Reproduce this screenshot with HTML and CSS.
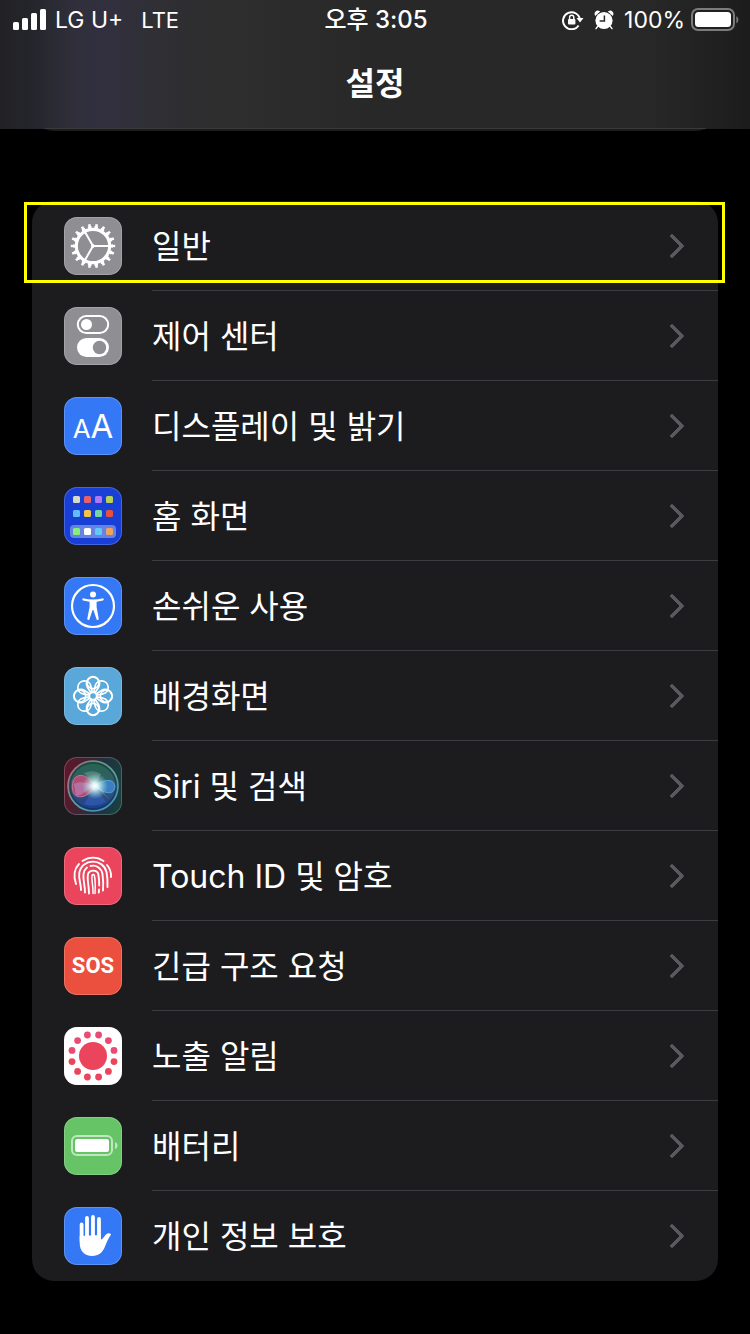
FILE: index.html
```html
<!DOCTYPE html>
<html lang="ko">

<head>
    <meta charset="UTF-8">
    <meta name="viewport" content="width=device-width, initial-scale=1.0">
    <title>설정</title>
    <link rel="stylesheet" href="styles.css">
</head>

<body>
    <header>
        <div class="status">
            <div class="status-left">
                <svg width="34" height="22" viewBox="0 0 34 22" fill="#fff">
                    <rect x="0" y="13" width="6" height="8" rx="1.5" />
                    <rect x="9" y="9" width="6" height="12" rx="1.5" />
                    <rect x="18" y="4" width="6" height="17" rx="1.5" />
                    <rect x="27" y="0" width="6" height="21" rx="1.5" />
                </svg>
                <span class="carrier">LG U+</span>
                <span class="network">LTE</span>
            </div>
            <div class="time">오후 3:05</div>
            <div class="status-right">
                <svg width="22" height="20" viewBox="0 0 22 20">
                    <path d="M16.6 15.5A8.5 8.5 0 1 1 18 10" fill="none" stroke="#fff" stroke-width="2" />
                    <path d="M14.5 8h7l-3.5 4.6z" fill="#fff" />
                    <rect x="6" y="9" width="7.4" height="5.6" rx="1" fill="#fff" />
                    <path d="M7.6 9V7.4a2.1 2.1 0 0 1 4.2 0V9" fill="none" stroke="#fff" stroke-width="1.4" />
                </svg>
                <svg class="alarm" width="20" height="20" viewBox="0 0 20 20">
                    <circle cx="10" cy="10.5" r="8.6" fill="#fff" />
                    <path d="M1.5 4.8A2.5 2.5 0 0 1 5 1.6zM18.5 4.8A2.5 2.5 0 0 0 15 1.6zM4 16l-2 2.6M16 16l2 2.6" fill="#fff" stroke="#fff" stroke-width="1.4" stroke-linecap="round" />
                    <path d="M10.4 5.4v5.7H5.6" fill="none" stroke="#282828" stroke-width="1.5" />
                </svg>
                <span>100%</span>
                <svg width="48" height="24" viewBox="0 0 48 24">
                    <rect x="1" y="1" width="42" height="21" rx="6" fill="none" stroke="#7c7c7c" stroke-width="2" />
                    <rect x="4" y="4" width="36" height="15" rx="3.5" fill="#fff" />
                    <path d="M45.4 8v7.4q2-1 2-3.7t-2-3.7z" fill="#7c7c7c" />
                </svg>
            </div>
        </div>
        <h1>설정</h1>
    </header>

    <main>
        <div class="group-prev"></div>

        <ul class="group">
            <li class="selected">
                <a href="#general">
                    <svg class="icon gray" viewBox="0 0 58 58" fill="none" stroke="#fff">
                        <circle cx="29" cy="29" r="16.7" stroke-width="3.2" />
                        <circle cx="29" cy="29" r="18.8" stroke-width="2.4" pathLength="36" stroke-dasharray="1.1 .9" stroke-dashoffset=".55" />
                        <circle cx="29" cy="29" r="20.7" stroke-width="3" pathLength="36" stroke-dasharray=".7 1.3" stroke-dashoffset=".35" />
                        <path d="M29 29H45M29 29L21 15M29 29L21 43" stroke-width="2" />
                        <circle cx="29" cy="29" r="1.4" fill="#fff" />
                    </svg>
                    <span class="label">일반</span>
                </a>
            </li>
            <li>
                <a href="#control">
                    <svg class="icon gray" viewBox="0 0 58 58">
                        <rect x="13.8" y="9" width="30.4" height="17" rx="8.5" fill="none" stroke="#fff" stroke-width="2" />
                        <circle cx="22.5" cy="17.5" r="5.5" fill="#fff" />
                        <rect x="13" y="31" width="32" height="19" rx="9.5" fill="#fff" />
                        <circle cx="35.5" cy="40.5" r="6.7" fill="#8e8e93" />
                    </svg>
                    <span class="label">제어 센터</span>
                </a>
            </li>
            <li>
                <a href="#display">
                    <span class="icon blue letters"><small>A</small>A</span>
                    <span class="label">디스플레이 및 밝기</span>
                </a>
            </li>
            <li>
                <a href="#home">
                    <svg class="icon navy" viewBox="0 0 58 58">
                        <rect x="6" y="38" width="46" height="13" rx="4" fill="#6584e2" />
                        <rect x="9" y="9" width="7" height="7" rx="1.5" fill="#d9d8d0" />
                        <rect x="20" y="9" width="7" height="7" rx="1.5" fill="#ea5f68" />
                        <rect x="31" y="9" width="7" height="7" rx="1.5" fill="#b078f4" />
                        <rect x="42" y="9" width="7" height="7" rx="1.5" fill="#b9d254" />
                        <rect x="9" y="23" width="7" height="7" rx="1.5" fill="#61bdf8" />
                        <rect x="20" y="23" width="7" height="7" rx="1.5" fill="#f6c445" />
                        <rect x="31" y="23" width="7" height="7" rx="1.5" fill="#72d6a5" />
                        <rect x="42" y="23" width="7" height="7" rx="1.5" fill="#e9503c" />
                        <rect x="9" y="41" width="7" height="7" rx="1.5" fill="#88ef7c" />
                        <rect x="20" y="41" width="7" height="7" rx="1.5" fill="#fff" />
                        <rect x="31" y="41" width="7" height="7" rx="1.5" fill="#62c8fa" />
                        <rect x="42" y="41" width="7" height="7" rx="1.5" fill="#f2a25a" />
                    </svg>
                    <span class="label">홈 화면</span>
                </a>
            </li>
            <li>
                <a href="#accessibility">
                    <svg class="icon blue" viewBox="0 0 58 58">
                        <circle cx="29" cy="29" r="21" fill="none" stroke="#fff" stroke-width="2.2" />
                        <circle cx="29" cy="17.6" r="3" fill="#fff" />
                        <path d="M18.8 21.2Q29 23.6 39.2 21.2Q40.6 22.8 39 23.4L32.6 24.8V30L34.8 42Q33.8 43.8 32.6 42.4L29.4 33H28.6L25.4 42.4Q24.2 43.8 23.2 42L25.6 30V24.8L19 23.4Q17.4 22.8 18.8 21.2z" fill="#fff" />
                    </svg>
                    <span class="label">손쉬운 사용</span>
                </a>
            </li>
            <li>
                <a href="#wallpaper">
                    <svg class="icon sky" viewBox="0 0 58 58" fill="none" stroke="#fff" stroke-width="1.7">
                        <defs>
                            <path id="petal" d="M29 29L23.5 20.5A6.6 6.6 0 1 1 34.5 20.5z" />
                        </defs>
                        <use href="#petal" />
                        <use href="#petal" transform="rotate(45 29 29)" />
                        <use href="#petal" transform="rotate(90 29 29)" />
                        <use href="#petal" transform="rotate(135 29 29)" />
                        <use href="#petal" transform="rotate(180 29 29)" />
                        <use href="#petal" transform="rotate(225 29 29)" />
                        <use href="#petal" transform="rotate(270 29 29)" />
                        <use href="#petal" transform="rotate(315 29 29)" />
                        <circle cx="29" cy="29" r="3.6" fill="#59a8d9" />
                        <circle cx="29" cy="15.7" r="6" />
                        <circle cx="29" cy="42.3" r="6" />
                        <circle cx="15.7" cy="29" r="6" />
                        <circle cx="42.3" cy="29" r="6" />
                    </svg>
                    <span class="label">배경화면</span>
                </a>
            </li>
            <li>
                <a href="#siri">
                    <svg class="icon siri" viewBox="0 0 58 58">
                        <defs>
                            <linearGradient id="ring" x1="0" y1="0" x2="1" y2="1">
                                <stop offset="0" stop-color="#c85a72" />
                                <stop offset=".5" stop-color="#5aa592" />
                                <stop offset="1" stop-color="#3f88d8" />
                            </linearGradient>
                            <linearGradient id="orb" x1=".5" y1="0" x2=".5" y2="1">
                                <stop offset="0" stop-color="#23664c" />
                                <stop offset=".5" stop-color="#385b70" />
                                <stop offset="1" stop-color="#183c93" />
                            </linearGradient>
                            <radialGradient id="glow">
                                <stop offset="0" stop-color="#fff" />
                                <stop offset=".25" stop-color="#e9ffff" stop-opacity=".9" />
                                <stop offset="1" stop-color="#8fe6e0" stop-opacity="0" />
                            </radialGradient>
                        </defs>
                        <circle cx="29" cy="29" r="25" fill="url(#orb)" stroke="url(#ring)" stroke-width="1.6" />
                        <circle cx="29" cy="29" r="23" fill="none" stroke="#102c38" stroke-opacity=".5" stroke-width="1.5" />
                        <path d="M9 24C13 15 24 17 31 29C25 41 12 43 9 35Q7.5 30 9 24z" fill="#d94a78" fill-opacity=".75" stroke="#f07fa0" stroke-width=".7" />
                        <path d="M10 27C18 23 25 27 31 29C23 31 21 38 12 39z" fill="#b58bc0" fill-opacity=".6" />
                        <path d="M31 29C40 22 49 21 51 29C51 37 43 39 31 29z" fill="#3c86cd" fill-opacity=".85" stroke="#62b7f0" stroke-width=".7" />
                        <path d="M31 29L20 47Q31 51 42 45z" fill="#3763c8" fill-opacity=".5" />
                        <path d="M31 29L20 16Q30 12 37 17zM31 29L46 43L36 31z" fill="#bfe8d4" fill-opacity=".25" />
                        <circle cx="31" cy="29" r="13" fill="url(#glow)" />
                    </svg>
                    <span class="label">Siri 및 검색</span>
                </a>
            </li>
            <li>
                <a href="#touchid">
                    <svg class="icon pink" viewBox="0 0 58 58" fill="none" stroke="#fff" stroke-width="1.9" stroke-linecap="round">
                        <path d="M12 37C10 31 9 23 15 17M18.5 14C25 9.7 33 9.7 39.5 14M43 18C46 21.5 47.3 26 47 30" />
                        <path d="M17 43C17 36 14.3 32 15.3 26C18 11 39 11 42.5 25C43.5 30 43.7 35 43.5 40" />
                        <path d="M21 45.5C21 38 18.8 33 19.5 27C20 24 21 22 23 20.5M26.5 19C32 17.5 37.5 21 38.5 27C39.3 33 39.5 38 39 43.5" />
                        <path d="M25 46.5C25 38 22.8 33 24 27C25.5 22.5 33 22.5 34.3 27C35 31 35.3 35 35.2 38.5M35 42.5L34.8 45.5" />
                        <path d="M29 46.5C29.5 39 27.3 34 28 28.5Q29.2 26.5 30.4 28.5C31.5 34 31.5 39 31 46.5" stroke-width="1.5" />
                    </svg>
                    <span class="label">Touch ID 및 암호</span>
                </a>
            </li>
            <li>
                <a href="#sos">
                    <span class="icon red sos">SOS</span>
                    <span class="label">긴급 구조 요청</span>
                </a>
            </li>
            <li>
                <a href="#exposure">
                    <svg class="icon white" viewBox="0 0 58 58" fill="#ea455d">
                        <defs>
                            <g id="dots">
                                <circle cx="34.6" cy="8" r="3.4" />
                                <circle cx="44.4" cy="13.6" r="3.4" />
                                <circle cx="50" cy="23.4" r="3.4" />
                            </g>
                        </defs>
                        <circle cx="29" cy="29" r="14" />
                        <use href="#dots" fill="#ea4b73" />
                        <use href="#dots" transform="rotate(90 29 29)" />
                        <use href="#dots" transform="rotate(180 29 29)" />
                        <use href="#dots" transform="rotate(270 29 29)" fill="#ea4b73" />
                    </svg>
                    <span class="label">노출 알림</span>
                </a>
            </li>
            <li>
                <a href="#battery">
                    <svg class="icon green" viewBox="0 0 58 58">
                        <rect x="8" y="19" width="40" height="19" rx="5" fill="none" stroke="#c1e7c1" stroke-width="2" />
                        <rect x="11" y="22" width="34" height="13" rx="2.5" fill="#fff" />
                        <path d="M51 25v7q2.6-1 2.6-3.5T51 25z" fill="#c1e7c1" />
                    </svg>
                    <span class="label">배터리</span>
                </a>
            </li>
            <li>
                <a href="#privacy">
                    <svg class="icon blue" viewBox="0 0 58 58" fill="#fff">
                        <path d="M17.6 17.5V34M23 11V31M29 10V31M35 12V31" stroke="#fff" stroke-width="3.8" stroke-linecap="round" />
                        <path d="M15.7 29V36C15.7 44 20.5 49 28 49C35 49 38.5 45.5 41 39.5C43 34.5 44.5 31 47 27.5C47.5 26.5 44 25 42 27.5L37.8 32.5L36.9 32V28z" />
                    </svg>
                    <span class="label">개인 정보 보호</span>
                </a>
            </li>
        </ul>
    </main>
</body>

</html>
```
FILE: styles.css
```css
* {
    box-sizing: border-box;
}

body {
    margin: 0;
    background-color: #000;
    color: #fff;
    font-family: Inter, "Noto Sans CJK KR", sans-serif;
}

header {
    position: relative;
    z-index: 1;
    height: 129px;
    background: linear-gradient(to right, #222225 0, #24252b 4%, #302f3b 10%, #32303f 14%, #2f2f35 20%, #2e2e2e 30%, #282828 50%, #282828 86%, #1c1c1c 100%);
}

/* hairline where the list slides under the bar */
header::after {
    content: "";
    position: absolute;
    left: 44px;
    right: 44px;
    bottom: 0;
    height: 1px;
    background-color: #3a3a3c;
}

.status {
    display: grid;
    grid-template-columns: 1fr auto 1fr;
    align-items: center;
    height: 40px;
    padding: 0 11px 0 13px;
    font-size: 23px;
}

.status-left,
.status-right {
    display: flex;
    align-items: center;
}

.status-left {
    gap: 8px;
}

.carrier {
    margin-right: 10px;
}

.network {
    font-size: 22px;
}

.status-right {
    justify-content: flex-end;
    gap: 6px;
}

.alarm {
    margin: 0 4px;
}

.time {
    line-height: 40px;
    font-size: 24px;
    font-weight: 500;
}

h1 {
    margin: 20px 0 0;
    font-size: 32px;
    line-height: 48px;
    font-weight: 600;
    text-align: center;
}

.group-prev {
    height: 48px;
    margin: -46px 32px 70px;
    border-radius: 22px;
    background-color: #1c1c1e;
}

.group {
    margin: 0 32px 53px;
    padding: 0;
    list-style: none;
    border-radius: 22px;
    background-color: #1c1c1e;
}

.group li {
    position: relative;
}

.group a {
    display: flex;
    align-items: center;
    gap: 30px;
    height: 90px;
    padding-left: 32px;
    color: #fff;
    text-decoration: none;
}

.label {
    flex: 1;
    display: flex;
    justify-content: space-between;
    height: 90px;
    padding-right: 37px;
    border-bottom: 1px solid #3d3d41;
    font-size: 32px;
    line-height: 92px;
}

.group li:last-child .label {
    border-bottom-color: transparent;
}

.label::after {
    content: "";
    align-self: center;
    width: 14px;
    height: 14px;
    border-top: 4px solid #5a5a5e;
    border-right: 4px solid #5a5a5e;
    border-radius: 2px;
    transform: rotate(45deg);
}

/* yellow frame around the row to tap */
.selected::after {
    content: "";
    position: absolute;
    top: 1px;
    right: -7px;
    bottom: 8px;
    left: -8px;
    border: 3px solid #ff0;
    pointer-events: none;
}

.icon {
    flex: none;
    width: 58px;
    height: 58px;
    border-radius: 13px;
    box-shadow: inset 0 0 0 1px rgba(255, 255, 255, 0.2);
}

.gray {
    background-color: #8e8e93;
}

.blue {
    background-color: #3478f6;
}

.navy {
    background-color: #183fd6;
}

.sky {
    background-color: #59a8d9;
}

.siri {
    background: linear-gradient(100deg, #641428, #22303f 60%, #17443f);
}

.pink {
    background-color: #ea455d;
}

.red {
    background-color: #eb4f3d;
}

.white {
    background-color: #fff;
}

.green {
    background-color: #67c466;
}

.letters {
    display: flex;
    align-items: baseline;
    justify-content: center;
    line-height: 58px;
    font-size: 33px;
}

.letters small {
    font-size: 26px;
}

.sos {
    font-family: Roboto, sans-serif;
    font-size: 22px;
    font-weight: bold;
    line-height: 58px;
    text-align: center;
}
```
